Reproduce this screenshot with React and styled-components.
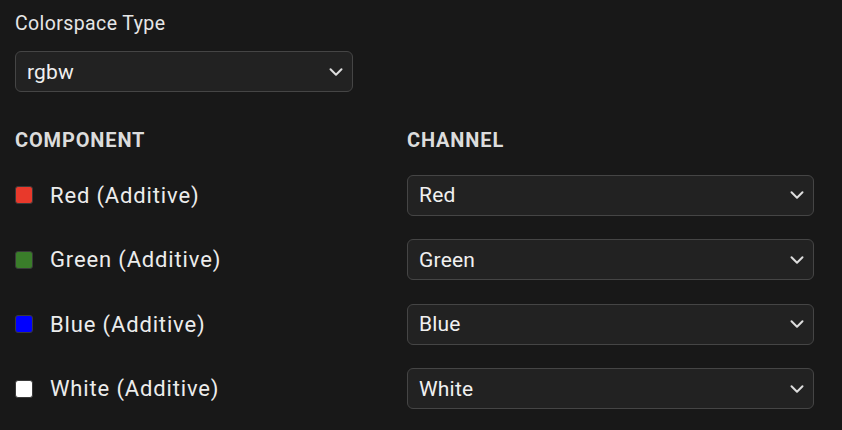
import React from 'react';
import styled, { createGlobalStyle } from 'styled-components';
import { ChevronDown } from 'lucide-react';

const GlobalStyle = createGlobalStyle`
  html, body {
    margin: 0;
    background: #181818;
  }
  body {
    font-family: Roboto, "Noto Sans", "Liberation Sans", sans-serif;
    color: #e8e8e8;
  }
`;

const components = [
  { name: 'Red (Additive)', color: '#e8392b', channel: 'Red' },
  { name: 'Green (Additive)', color: '#3a7d2a', channel: 'Green' },
  { name: 'Blue (Additive)', color: '#0000ff', channel: 'Blue' },
  { name: 'White (Additive)', color: '#ffffff', channel: 'White' },
];

export default function App() {
  return (
    <Page>
      <GlobalStyle />
      <Field>
        <Label>Colorspace Type</Label>
        <Select width="338px">
          <span>rgbw</span>
          <ChevronDown size={22} strokeWidth={2.2} />
        </Select>
      </Field>
      <Table>
        <Heading>COMPONENT</Heading>
        <Heading>CHANNEL</Heading>
        {components.map((c) => (
          <React.Fragment key={c.name}>
            <ComponentCell>
              <Swatch color={c.color} />
              <span>{c.name}</span>
            </ComponentCell>
            <Select width="407px">
              <span>{c.channel}</span>
              <ChevronDown size={22} strokeWidth={2.2} />
            </Select>
          </React.Fragment>
        ))}
      </Table>
    </Page>
  );
}

const Page = styled.div`
  padding: 12px 15px 0;
  box-sizing: border-box;
  width: 842px;
  height: 430px;
  overflow: hidden;
`;

const Field = styled.div`
  display: flex;
  flex-direction: column;
  gap: 15px;
`;

const Label = styled.div`
  font-size: 19.5px;
  line-height: 24px;
  letter-spacing: 0.4px;
  color: #e6e6e6;
`;

const Select = styled.div`
  box-sizing: border-box;
  width: ${(p) => p.width};
  height: 41px;
  display: flex;
  align-items: center;
  justify-content: space-between;
  padding: 0 5px 0 11px;
  background: #222222;
  border: 1.5px solid #454545;
  border-radius: 6px;
  font-size: 21px;
  letter-spacing: 0.2px;
  color: #f0f0f0;
  svg {
    color: #dddddd;
  }
`;

const Table = styled.div`
  display: grid;
  grid-template-columns: 392px 407px;
  grid-template-rows: 22px repeat(4, 41px);
  row-gap: 23.6px;
  margin-top: 37px;
`;

const Heading = styled.div`
  font-size: 20px;
  line-height: 22px;
  font-weight: 700;
  color: #dcdcdc;
  letter-spacing: 0.85px;
`;

const ComponentCell = styled.div`
  display: flex;
  align-items: center;
  gap: 17px;
  font-size: 22px;
  letter-spacing: 0.85px;
  color: #ececec;
`;

const Swatch = styled.span`
  box-sizing: border-box;
  width: 18px;
  height: 18px;
  border: 1.5px solid #3a3a3a;
  border-radius: 3px;
  background: ${(p) => p.color};
  flex-shrink: 0;
`;
